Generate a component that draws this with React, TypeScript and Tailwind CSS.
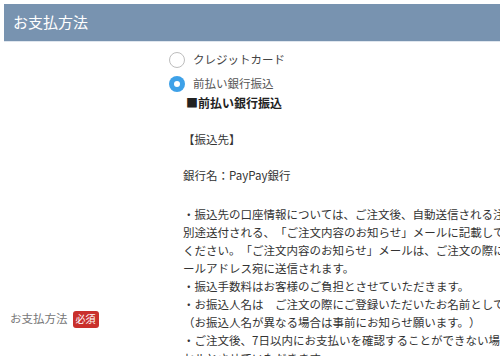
import React from "react";

const lines = [
  "・振込先の口座情報については、ご注文後、自動送信される注文確認メールとは",
  "別途送付される、「ご注文内容のお知らせ」メールに記載しておりますのでご確認",
  "ください。「ご注文内容のお知らせ」メールは、ご注文の際にご登録いただいたメ",
  "ールアドレス宛に送信されます。",
  "・振込手数料はお客様のご負担とさせていただきます。",
  "・お振込人名は　ご注文の際にご登録いただいたお名前としてください。",
  "（お振込人名が異なる場合は事前にお知らせ願います。）",
  "・ご注文後、7日以内にお支払いを確認することができない場合は、ご注文をキャン",
  "セルとさせていただきます。",
];

export default function App() {
  return (
    <div
      className="w-[500px] h-[356px] overflow-hidden bg-white pt-1 pl-1 text-[#333] [text-spacing-trim:space-all]"
      style={{ fontFamily: '"Noto Sans CJK JP", "Noto Sans", sans-serif' }}
    >
      <div className="w-[600px]">
        <div className="h-[38px] bg-[#7893b0] border-b border-[#dfe6ee] flex items-center pl-[9px] text-white text-[15px]">
          お支払方法
        </div>
        <div className="flex">
          <div className="w-[165px] shrink-0 pt-[268px] pl-[6px]">
            <div className="flex items-center h-[18px] text-[11.5px] text-[#777]">
              <span>お支払方法</span>
              <span className="ml-[5px] h-[17px] flex items-center bg-[#c9302c] text-white text-[10px] leading-none rounded-[3px] px-[3px]">
                必須
              </span>
            </div>
          </div>
          <div className="flex-1 pt-[6px]">
            <label className="flex items-center h-[24px] gap-[8px] text-[11.5px] text-[#444]">
              <span className="w-[16px] h-[16px] rounded-full border border-[#bdbdbd] bg-white" />
              <span>クレジットカード</span>
            </label>
            <label className="flex items-center h-[24px] gap-[8px] text-[11.5px] text-[#555]">
              <span className="w-[16px] h-[16px] rounded-full bg-[#3ea1e8] flex items-center justify-center">
                <span className="w-[6px] h-[6px] rounded-full bg-white" />
              </span>
              <span>前払い銀行振込</span>
            </label>
            <div className="ml-[17px] h-[14px] leading-[14px] text-[12px] font-bold text-[#222]">
              ■前払い銀行振込
            </div>
            <div className="ml-[14px] mt-[20px] text-[11.5px] leading-[18px] whitespace-nowrap">
              <div>【振込先】</div>
              <div>&nbsp;</div>
              <div>銀行名：PayPay銀行</div>
              <div>&nbsp;</div>
              <div className="mt-[3px]">
                {lines.map((l, i) => (
                  <div key={i}>{l}</div>
                ))}
              </div>
            </div>
          </div>
        </div>
      </div>
    </div>
  );
}
